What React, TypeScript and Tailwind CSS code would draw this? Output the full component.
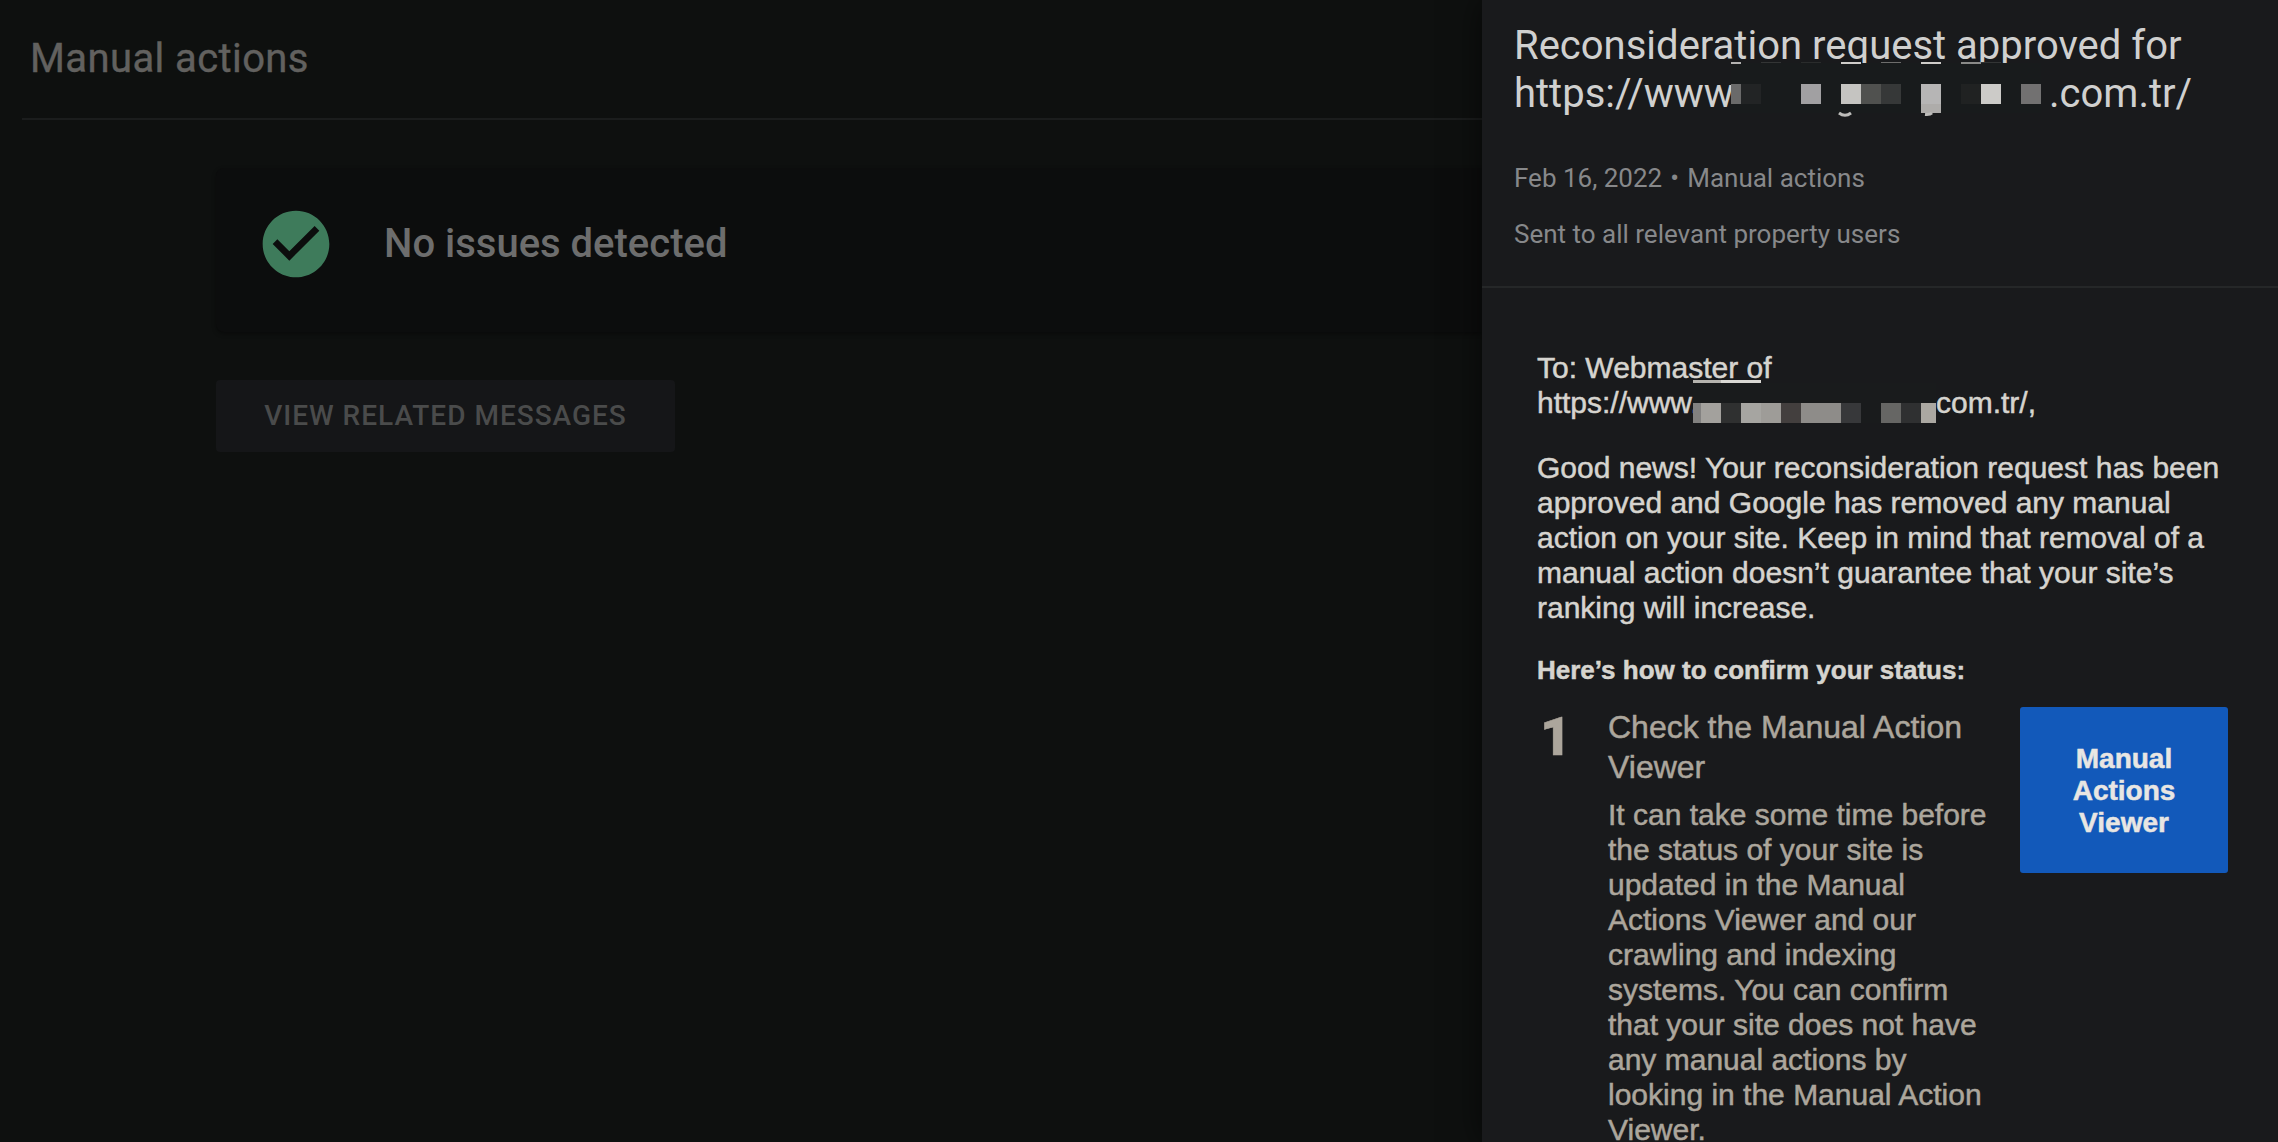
import { MdCheckCircle } from 'react-icons/md';

type Block = { x: number; y: number; w: number; h: number; fill: string };

const titleBlocks: Block[] = [
  { x: 0, y: 22, w: 310, h: 50, fill: '#181b1c' },
  { x: 0, y: 21, w: 10, h: 2, fill: '#b4b3b1' },
  { x: 30, y: 21, w: 20, h: 1, fill: '#333535' },
  { x: 70, y: 21, w: 20, h: 1, fill: '#2a2c2c' },
  { x: 110, y: 21, w: 20, h: 2, fill: '#cfcdca' },
  { x: 150, y: 21, w: 20, h: 1, fill: '#6d6d6c' },
  { x: 190, y: 21, w: 20, h: 2, fill: '#cfcdca' },
  { x: 230, y: 21, w: 20, h: 2, fill: '#8a8a88' },
  { x: 250, y: 21, w: 20, h: 1, fill: '#333535' },
  { x: 0, y: 43, w: 10, h: 20, fill: '#6a6a6a' },
  { x: 10, y: 43, w: 20, h: 20, fill: '#222425' },
  { x: 70, y: 43, w: 20, h: 20, fill: '#a1a0a2' },
  { x: 110, y: 43, w: 20, h: 20, fill: '#c5c4c1' },
  { x: 130, y: 43, w: 20, h: 20, fill: '#50514f' },
  { x: 150, y: 43, w: 20, h: 20, fill: '#363838' },
  { x: 190, y: 43, w: 20, h: 20, fill: '#b6b5b5' },
  { x: 190, y: 63, w: 20, h: 9, fill: '#aeacaa' },
  { x: 230, y: 43, w: 20, h: 20, fill: '#202222' },
  { x: 250, y: 43, w: 20, h: 20, fill: '#cccbc8' },
  { x: 290, y: 43, w: 20, h: 20, fill: '#727171' },
];

const bodyBlocks: Block[] = [
  { x: 0, y: 3, w: 243, h: 40, fill: '#191b1c' },
  { x: 0, y: 0, w: 28, h: 3, fill: '#b5b3ae' },
  { x: 28, y: 0, w: 40, h: 3, fill: '#dad8d4' },
  { x: 0, y: 23, w: 8, h: 20, fill: '#828180' },
  { x: 8, y: 23, w: 20, h: 20, fill: '#a3a19d' },
  { x: 28, y: 23, w: 20, h: 20, fill: '#2f3030' },
  { x: 48, y: 23, w: 20, h: 20, fill: '#a6a5a1' },
  { x: 68, y: 23, w: 20, h: 20, fill: '#9e9c98' },
  { x: 88, y: 23, w: 20, h: 20, fill: '#433f3e' },
  { x: 108, y: 23, w: 40, h: 20, fill: '#8e8c89' },
  { x: 148, y: 23, w: 20, h: 20, fill: '#37383a' },
  { x: 188, y: 23, w: 20, h: 20, fill: '#666664' },
  { x: 208, y: 23, w: 20, h: 20, fill: '#2f3031' },
  { x: 228, y: 23, w: 15, h: 20, fill: '#aba8a2' },
];

const Blocks = ({ blocks }: { blocks: Block[] }) => (
  <>
    {blocks.map((b, i) => (
      <rect key={i} x={b.x} y={b.y} width={b.w} height={b.h} fill={b.fill} />
    ))}
  </>
);

const MainPage = () => (
  <main className="w-[1482px] shrink-0 bg-[#0e100f] pl-[22px] font-[Roboto,sans-serif]">
    <header className="h-[120px] border-b-2 border-[#1b1d1d] pt-[35px] pl-2">
      <h1 className="text-[40px] leading-[48px] tracking-[0.4px] text-[#62615f] [-webkit-text-stroke:0.4px]">Manual actions</h1>
    </header>

    <section className="mt-12 pl-[194px]">
      <div className="flex h-[164px] items-center gap-12 rounded-l-lg bg-[#0c0d0d] pb-3 pl-10 shadow-[0_2px_4px_rgba(0,0,0,0.35)]">
        <MdCheckCircle className="size-20 shrink-0 text-[#3e7b5b]" />
        <h2 className="text-[40px] leading-[48px] font-medium text-[#6d6d6d]">No issues detected</h2>
      </div>

      <button className="mt-12 flex h-[72px] w-[459px] items-center justify-center rounded bg-[#151618] text-[28px] font-medium tracking-[1px] text-[#4a4b4b]">
        VIEW RELATED MESSAGES
      </button>
    </section>
  </main>
);

const MessageHeader = () => (
  <header className="h-[288px] border-b-2 border-[#252728] pt-[22px] pl-8 font-[Roboto,sans-serif]">
    <h2 className="text-[40px] leading-[48px] text-[#d0d0cf]">
      <span className="block">Reconsideration request approved for</span>
      <span className="flex">
        <span className="w-[217px]">https://www</span>
        <span className="relative w-[318px]">
          <svg className="absolute -top-[29px] left-0" width="310" height="78" viewBox="0 0 310 78">
            <Blocks blocks={titleBlocks} />
            <path d="M108 72 Q114 76.5 120 72" fill="none" stroke="#bdbcba" strokeWidth="3" />
            <path d="M194 73.5 Q199 74 201 72" fill="none" stroke="#bdbcba" strokeWidth="3" />
          </svg>
        </span>
        <span>.com.tr/</span>
      </span>
    </h2>
    <p className="mt-11 flex text-[26px] leading-8 text-[#87888a]">
      <span>Feb 16, 2022</span>
      <span className="w-[25px] text-center">•</span>
      <span>Manual actions</span>
    </p>
    <p className="mt-6 text-[26px] leading-8 text-[#87888a]">Sent to all relevant property users</p>
  </header>
);

const MessageBody = () => (
  <article className="pt-[62px] pl-[55px] font-['Liberation_Sans',sans-serif] text-[30px] leading-[35px] text-[#d6d4cf] [-webkit-text-stroke:0.5px]">
    <p>
      <span className="block">To: Webmaster of</span>
      <span className="flex">
        <span className="w-[156px]">https://www.</span>
        <span className="relative w-[243px]">
          <svg className="absolute -top-[5px] left-0" width="243" height="43" viewBox="0 0 243 43">
            <Blocks blocks={bodyBlocks} />
          </svg>
        </span>
        <span>com.tr/,</span>
      </span>
    </p>
    <p className="mt-[30px]">
      Good news! Your reconsideration request has been
      <br />
      approved and Google has removed any manual
      <br />
      action on your site. Keep in mind that removal of a
      <br />
      manual action doesn’t guarantee that your site’s
      <br />
      ranking will increase.
    </p>
    <h3 className="mt-[30px] text-[26px] leading-[30px] font-bold">Here’s how to confirm your status:</h3>

    <div className="mt-[22px] flex items-start text-[#aca69c]">
      <div className="w-[71px] shrink-0 pl-[3px] font-[Roboto,sans-serif] text-[54px] leading-[60px] font-black">1</div>
      <div className="w-[412px] shrink-0">
        <h4 className="text-[32px] leading-10">
          Check the Manual Action
          <br />
          Viewer
        </h4>
        <p className="mt-[10px]">
          It can take some time before
          <br />
          the status of your site is
          <br />
          updated in the Manual
          <br />
          Actions Viewer and our
          <br />
          crawling and indexing
          <br />
          systems. You can confirm
          <br />
          that your site does not have
          <br />
          any manual actions by
          <br />
          looking in the Manual Action
          <br />
          Viewer.
        </p>
      </div>
      <button className="h-[166px] w-[208px] shrink-0 rounded-[3px] bg-[#1259ba] px-12 pt-px text-center text-[28px] leading-8 font-bold text-[#e8e6e3]">
        Manual Actions Viewer
      </button>
    </div>
  </article>
);

const App = () => {
  return (
    <div className="flex h-screen overflow-hidden bg-[#0e100f]">
      <MainPage />
      <aside className="z-10 flex-1 bg-[#191a1c] shadow-[0_0_32px_rgba(0,0,0,0.6)]">
        <MessageHeader />
        <MessageBody />
      </aside>
    </div>
  );
};

export default App;
